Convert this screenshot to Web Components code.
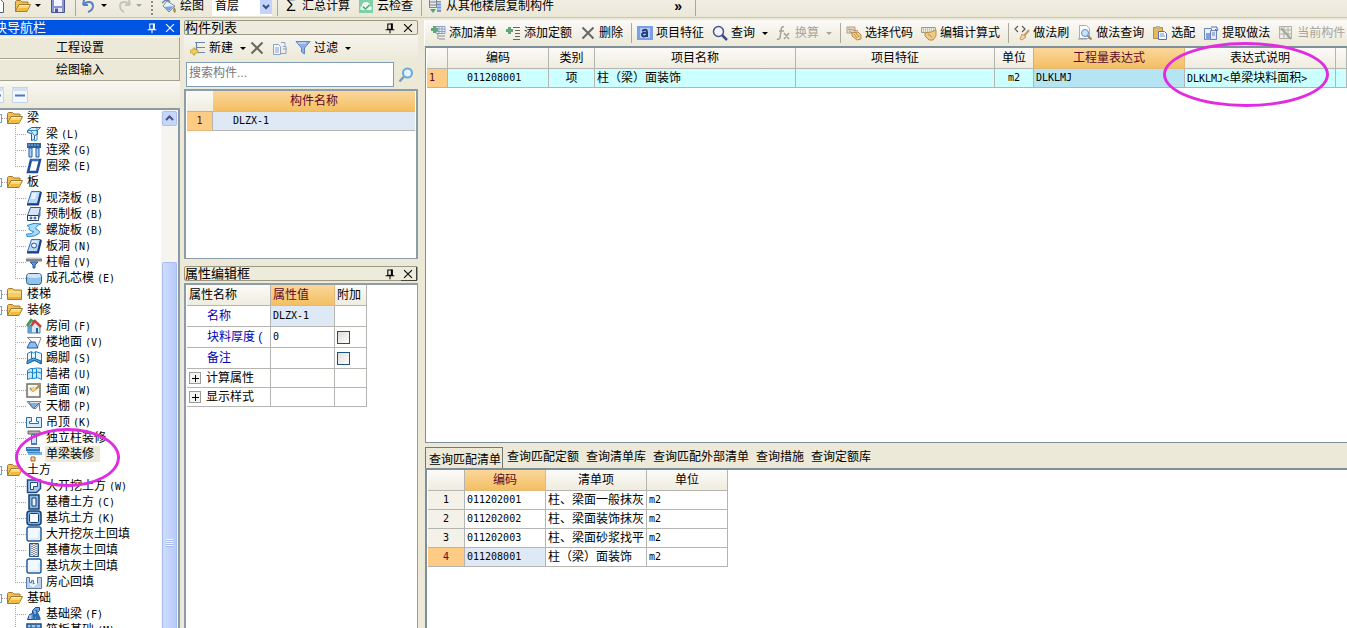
<!DOCTYPE html>
<html lang="zh-CN">
<head>
<meta charset="utf-8">
<title>构件做法</title>
<style>
html, body { margin: 0; height: 100%; overflow: hidden; }
body { font: 12px/16px "Liberation Sans", "Noto Sans CJK SC", sans-serif; color: #000; background: #ece9d8; }
</style>
</head>
<body>
<cost-app></cost-app>
<script>
const base = `
*, *::before, *::after { box-sizing: border-box; }
button { font: inherit; color: inherit; background: none; border: 0; padding: 0; margin: 0; white-space: nowrap; }
.m { font-family: "DejaVu Sans Mono", monospace; font-size: 10px; }
`;
const gridCss = `
table { border-collapse: separate; border-spacing: 0; table-layout: fixed; }
th, td { border: 0 solid #b4b4b0; border-width: 0 1px 1px 0; padding: 0 2px; height: 19px; font-weight: normal; text-align: left; white-space: nowrap; overflow: hidden; line-height: 16px; }
thead th { height: 21px; text-align: center; background: linear-gradient(#fbfaf7, #efecdf); }
thead th.on { background: linear-gradient(#fad79b, #f4bf62); color: #5c0a2c; border-color: #e3b878; }
tbody th { background: #f3f1e8; text-align: center; }
tbody th.on { background: #fdcb83; color: #5c0a2c; }
td.sel { background: #dfe8f5; }
td.c { text-align: center; }
`;
function define(name, css, html, setup) {
  const tpl = document.createElement('template');
  tpl.innerHTML = `<style>${base}${css}</style>${html}`;
  customElements.define(name, class extends HTMLElement {
    constructor() {
      super();
      this.attachShadow({ mode: 'open' }).append(tpl.content.cloneNode(true));
    }
    connectedCallback() { if (setup) setup.call(this, this.shadowRoot); }
  });
}

const B = '#1d5fa8', L = '#a9d3f7';
const sheet = '<path d="M5.500 1.500h9l-3 12h-10z" fill="#bcd8f7" stroke="#3d6fae"/><path d="M6 3h5l-2 6H5z" fill="#e6f2ff"/><path d="M1 14.500h11l3-12.500" fill="none" stroke="#163f8c" stroke-width="2"/>';
const ICONS = {
  folderOpen: '<path d="M.5 13.500v-10l1-1h4l1.500 1.500h6v3" fill="#eebf55" stroke="#a67c2c"/><path d="M.5 13.500l3.500-7h11.500l-3.500 7z" fill="#fbd978" stroke="#a67c2c"/><path d="M2 13l2-3h9.500l-1.500 3z" fill="#f0b941"/><path d="M4.500 7.500h9.500" stroke="#fff0b5"/>',
  folder: '<path d="M.5 13.500v-10l1-1h4l1.500 1.500h7.500v9.500z" fill="#f6cd62" stroke="#a67c2c"/><path d="M1 6h13" stroke="#fdf0b8"/><path d="M1 12h13" stroke="#e5ab3b" stroke-width="2"/>',
  page: '<path d="M2.500 1.500h8l3 3v10h-11z" fill="#fff" stroke="#46648c"/>',
  save: '<path d="M1.500 1.500h13v13h-13z" fill="#8b95cf" stroke="#4b5496"/><path d="M4 2h8v6H4z" fill="#f4f5ff"/><path d="M4 10h8v4H4z" fill="#e4e7f8"/><path d="M5 10.500h3V14H5z" fill="#4b5496"/>',
  undo: '<path d="M2 7l1-5M2 7h5M3 6c3-3 9-3 9 2 0 3-2 5-5 6" fill="none" stroke="#5b82c4" stroke-width="2"/>',
  redo: '<path d="M14 7l-1-5M14 7H9M13 6C10 3 4 3 4 8c0 3 2 5 4 6" fill="none" stroke="#c5c5c0" stroke-width="2"/>',
  draw: '<path d="M6 3l8 5-6 6-6-6z" fill="#e8f1fa" stroke="#7a8ca3"/><path d="M3 9l10-1-5 5z" fill="#7fa5d8"/><path d="M1 5l5-4 3 3" fill="none" stroke="#6c86a4" stroke-width="1.500"/><path d="M13 9q3 3 1 6-3-2-1-6" fill="#a08545"/>',
  check: '<path d="M1 1h14v14H1z" fill="#7fd0a4"/><path d="M3 12q-2-3 1-4 0-4 4-4 4 0 4 4 3 1 1 4z" fill="#e9faf1"/><path d="M5 8.500l2.500 2.500 4-4" fill="none" stroke="#48a577" stroke-width="1.500"/>',
  copyFloor: '<path d="M2.500 1.500h7v8h-7z" fill="#e6e9ec" stroke="#7d858e"/><path d="M3 4h6M3 7h6" stroke="#7d858e"/><path d="M10 3h4v11h-4z" fill="#7295d2"/><path d="M10 5h4M10 8h4M10 11h4" stroke="#e4edfb"/><path d="M3 11h6l-3 4z" fill="#48a577"/>',
  addList: '<path d="M6 1.500h9v7H6z" fill="#eef2fb" stroke="#8b9fc6"/><path d="M6 4h9M6 6.500h9M9 2v6M12 2v6" stroke="#8b9fc6"/><path d="M3 1h3v2h2v3H6v2H3V6H1V3h2z" fill="#61a779"/><path d="M9 11h6M9 14h6M8 8v6" stroke="#8b8b86"/>',
  addQuota: '<path d="M3 2h3v2h2v3H6v2H3V7H1V4h2z" fill="#61a779"/><path d="M8 2.500h7M10 5.500h5M10 8.500h5M10 11.500h5M8 14.500h7" stroke="#686862"/>',
  x: '<path d="M2.500 2.500l11 11M13.500 2.500l-11 11" stroke="#686864" stroke-width="2"/>',
  feature: '<path d="M0 1h16v14H0z" fill="#7b9fe4"/><path d="M3 3h10v10H3z" fill="#b6cdf3"/><path d="M5 6q5-3 5 1v5M10 8q-5-1-5 2 1 3 5 0" fill="none" stroke="#233d7d" stroke-width="2"/>',
  query: '<circle cx="6.500" cy="6.500" r="5" fill="#f2f5ff" stroke="#46528f" stroke-width="1.500"/><path d="M10 10l5 5" stroke="#3c4a90" stroke-width="2.500"/>',
  fx: '<path d="M8 2Q5 1 5 6l-1 7q-1 2-3 1M3 6h5M8 8l5 6M13 8l-5 6" fill="none" stroke="#a2a29b" stroke-width="1.500"/>',
  code: '<path d="M1 2h8v6H1z" fill="#e5dcd0" stroke="#ad9c86"/><path d="M2 4l10 2M3 6l7 4" stroke="#bc8b6a"/><path d="M6 8l6-1 3 3v4l-4 1-5-4z" fill="#f3cf8c" stroke="#ba8b48"/><path d="M8 9l3 4M10 8l3 4" stroke="#ba8b48"/>',
  edit: '<path d="M.5 2.500h14v5H.5z" fill="#ededde" stroke="#9c9c85"/><path d="M2 4h12M2 6h12" stroke="#9c9c85" stroke-dasharray="1 1"/><path d="M4 8l6-1 5-2v6l-3 4H8l-4-4z" fill="#efca83" stroke="#ba9050"/><path d="M7 9l4 3" stroke="#ba9050"/>',
  brush: '<path d="M4 1L1 4l3 3M8 1l3 3-3 3" fill="none" stroke="#5a5a57" stroke-width="1.200"/><path d="M15 5l-5 6" stroke="#c49a64" stroke-width="2"/><path d="M8 9l4 3-4 3-2-1z" fill="#f2d7a5" stroke="#c49a64"/>',
  find: '<path d="M2.500.5h7l3 3v10h-10z" fill="#fff" stroke="#a5aec6"/><circle cx="8" cy="8" r="3.500" fill="#c5e4fc" stroke="#5f8abf"/><path d="M10.500 10.500l4 4" stroke="#a28559" stroke-width="2"/><path d="M1 14h9" stroke="#8793b4"/>',
  paste: '<path d="M1.500 2.500h9v11h-9z" fill="#e6bb57" stroke="#b38e48"/><path d="M4 1h4v3H4z" fill="#b7b4a8"/><path d="M6.500 6.500h6l2 2v6h-8z" fill="#f5f8ff" stroke="#5a6ea8"/><path d="M8 9h4M8 11h5" stroke="#7b91cc"/>',
  extract: '<path d="M1.500 3.500h7v11h-7z" fill="#eaf1ff" stroke="#6a84bd"/><path d="M3 8h7l3 7H3z" fill="#7fa0dc"/><path d="M7.500 5.500h6v9h-6z" fill="#dfeaff" stroke="#6a84bd"/><path d="M8 2h6v4M12 4l2 2 1-2" fill="none" stroke="#4f74b7"/><path d="M9 8h3M9 10h3" stroke="#6a84bd"/>',
  current: '<path d="M1.500 1.500h12v12h-12zM2 5h11M2 9h11M6 2v11M10 2v11" fill="#eeeee8" stroke="#b1b1aa"/><path d="M3 3l10 11" stroke="#a5a59f" stroke-width="2"/>',
  create: '<path d="M5 2.500h10M7 7.500h8M7 12.500h8M6.500 3v10" fill="none" stroke="#6c86b4" stroke-width="1.200"/><path d="M3 8h2v2h3v3H5v2H3v-2H0v-3h3z" fill="#f1d15c" stroke="#a0832a" stroke-width=".5"/>',
  dup: '<path d="M1.500 4.500h5l2 2v8h-7z" fill="#f3f7ff" stroke="#8ba3c9"/><path d="M3 8h4M3 10h4M3 12h4" stroke="#8ba3c9"/><path d="M9 2.500h4v3M9 13.500h5v-7h-3" fill="none" stroke="#8ba3c9"/><path d="M11 9h4" stroke="#8ba3c9"/>',
  filter: '<path d="M1 1.500h14L9.500 8v6l-3-2V8z" fill="#8db1e8" stroke="#5d86c9"/><path d="M3 3h8" stroke="#dcebff"/>',
  lens: '<circle cx="9.500" cy="6" r="4.500" fill="#e4f4ff" stroke="#6ca9d8" stroke-width="2"/><path d="M6 9.500l-4.500 5" stroke="#7d9ac0" stroke-width="2.500"/>',
  collapse: '<path d="M.5.5h15v15H.5z" fill="#f4f8fe" stroke="#c3d3ea"/><path d="M0 1h16v3H0z" fill="#d4e0f1"/><path d="M3 8.500h10" stroke="#4979b6" stroke-width="2"/>',
  pin: '<path d="M5.500 3.500h5v6h-5zM3 10h10M8 10v4" fill="none" stroke="currentColor" stroke-width="1.200"/><path d="M9 3v7h2V3z" fill="currentColor"/>',
  close: '<path d="M3.500 3.500l9 9M12.500 3.500l-9 9" stroke="currentColor" stroke-width="1.200"/>',
  beam: `<path d="M1.500 4.500l4-3h9l-3 3v4l-3 1v4l-3 1v-7l-4-1z" fill="#d7edff" stroke="${B}"/><path d="M1.500 4.500h10l3-3M5 5l3 4M11 2v12l-3 1" fill="none" stroke="#3387cf"/>`,
  link: `<path d="M1 1h14v5H1z" fill="#2f5f9c"/><path d="M2 3h12" stroke="#8fc1ee" stroke-dasharray="2 1"/><path d="M3 6h3v9H3zM10 6h3v9h-3z" fill="${L}" stroke="${B}"/>`,
  ring: '<path d="M5 2h9l-3 12H2z" fill="#fff" stroke="#1e4e98" stroke-width="2.500"/><path d="M5 2h8" stroke="#5a8fcf"/>',
  slab: sheet,
  preslab: '<path d="M4.500 1.500h10l-2 8h-11z" fill="#d7e5f7" stroke="#32558a"/><path d="M1.500 9.500h11v5h-11z" fill="#fff" stroke="#1d3d70"/><path d="M12.500 9.500l2-8v8l-2 5z" fill="#5480b8"/><circle cx="5" cy="12" r="1" fill="none" stroke="#1d3d70"/><circle cx="9" cy="12" r="1" fill="none" stroke="#1d3d70"/>',
  spiral: '<path d="M1 3.500Q8 0 15 2q-6 2-5 5 5 2 3 4.500Q9 15 1 14.500L.5 12q7 0 7-2.500-6-1-4-4z" fill="#a8dbfa" stroke="#2788c6"/>',
  hole: sheet + '<circle cx="8" cy="7.500" r="2.500" fill="#eaf4ff" stroke="#23549a"/>',
  cap: '<path d="M0 4.500h16v3H0z" fill="#858585"/><path d="M1 4h14" stroke="#c7c7c7"/><path d="M4 8h8l-3 3v3H7v-3z" fill="#5597dd" stroke="#265b9c"/>',
  mold: '<rect x=".5" y="3.500" width="15" height="11" rx="3" fill="#8fc3ec" stroke="#2e608f"/><path d="M1 7q7 2 14 0l-1-3H2z" fill="#cbe4f8"/>',
  house: '<path d="M2 7l6-5 6 5v8H2z" fill="#d2e9f7" stroke="#4e81a7"/><path d="M2 7h4v8H2z" fill="#5f9fd2"/><path d="M1 8l4-6 3 2" fill="none" stroke="#3e9a53" stroke-width="2.500"/><path d="M5 8l4-5 6 6" fill="none" stroke="#d03c3a" stroke-width="2.500"/><path d="M10 10h2v5h-2z" fill="#315e9a"/>',
  floor: '<path d="M1 3.500h14M2 4l4 4M15 4l-4 10" fill="none" stroke="#8a8a84"/><path d="M1 14l3-6h5l3 6z" fill="#8ebdef" stroke="#2456a5"/>',
  skirt: `<path d="M1.500 13.500V3.500l4-2q2 3 4 0l6 2v10l-5-2q-2-2-4 0z" fill="#e7f5ff" stroke="#1681cc"/><path d="M1 11l4-2q3-2 5 0l5 2v3l-5-3q-2-1-4 0l-5 3z" fill="#55a8e3" stroke="#1265a6"/><path d="M5.500 2v7M9.500 2v7" stroke="#1681cc"/>`,
  dado: `<path d="M1.500 13.500V4.500q3-3 6-2 4-1 8 0v11q-4-3-8-1-3-1-6 1z" fill="#c9e7ff" stroke="#1681cc"/><path d="M1.500 7q3-2 6 0 4-2 8 0M6.500 3v9M10.500 3v9" fill="none" stroke="#1681cc"/>`,
  wall: '<path d="M1 2h13v13H1z" fill="#f8f8f5" stroke="#6c6c68" stroke-width="1.500"/><path d="M4 6l3 3 5-4 2-4" fill="none" stroke="#b0904a" stroke-width="2"/><path d="M5 6l3-2 2 3-3 3z" fill="#f0d584"/>',
  ceiling: '<path d="M1 3.500h14l-5 7H7z" fill="#dfe3e3" stroke="#7c8583"/><path d="M4 5h8l-3 5H7z" fill="#7dafe5"/><path d="M8 10l5-5 1 8" fill="none" stroke="#4573a4"/><path d="M3 4l4 6" stroke="#427dc0"/>',
  suspended: '<path d="M.5 3.500h5v4h-2v2h9v-2h-2v-4h5v10H.5z" fill="#d5edff" stroke="#276eab"/>',
  column: '<path d="M2 1h12v3H2z" fill="#b5b5b2" stroke="#666"/><path d="M5.500 4.500h5v10h-5z" fill="#cde3f6" stroke="#47708d"/><path d="M5 13h6v2H5z" fill="#4a7db6"/>',
  single: '<path d="M0 1h14v4H0z" fill="#2d79bc"/><path d="M1 2.500h12" stroke="#8ac2ef"/><path d="M2 6h14v3H2z" fill="#75b3e8"/><path d="M1 6h13" stroke="#235d97"/><path d="M5 11h4v4H5z" fill="#f6d39d" stroke="#ad651f"/>',
  dig: '<path d="M1.500 2h13v8.500l-4 4h-9z" fill="#aac8e8" stroke="#1c4f88" stroke-width="1.500"/><path d="M4.500 4.500h7v4h-4v3h-3z" fill="#fff" stroke="#1c4f88"/>',
  trench: '<path d="M3 1h10v14H3z" fill="#8fb8e4" stroke="#16406f" stroke-width="1.500"/><path d="M6 4h4v8H6z" fill="#e8f2fd" stroke="#16406f"/>',
  pit: '<rect x="1" y="1" width="14" height="14" rx="3" fill="#82b4e5" stroke="#153e72" stroke-width="1.500"/><rect x="3.500" y="3.500" width="9" height="9" rx="1" fill="#f7fbff" stroke="#153e72"/>',
  fill: '<rect x="1" y="1" width="14" height="14" rx="2" fill="#f3f8ff" stroke="#235e9c" stroke-width="1.500"/><path d="M3 13h10V5" fill="none" stroke="#cde0f4"/>',
  hatch: '<path d="M3.500 1.500h9v13h-9z" fill="#e8ebef" stroke="#28557f"/><path d="M6 2v12M10 2v12M8 3v11" stroke="#343d47" stroke-dasharray="1 1"/><path d="M4.500 2v12M11.500 2v12" stroke="#8bb3de"/>',
  room: '<path d="M.5 3.500h3v5h2v-2h2v3h4v-6h4v11H.5z" fill="#b9d2ed" stroke="#5c7da5"/><path d="M4 10l3 2 4-3" fill="none" stroke="#f5f9ff" stroke-width="2"/>',
  footing: '<path d="M1.500 13.500l2-5 3-1V4.500l3-3h4v3l-3 3v6z" fill="#77a5da" stroke="#17487f"/><path d="M6.500 14V7l4-4 4 9v2h-4l-1-4-1 4z" fill="#2b6db3"/><path d="M4 9v4M9 5v3" stroke="#dcecff"/>',
  raft: '<path d="M1 2h14v12H1z" fill="#9cc3e9" stroke="#174b82" stroke-width="1.500"/><path d="M2 6h12M2 10h12M5 3v10M10 3v10" stroke="#174b82"/>'
};

define('ui-icon', ':host{display:block;flex:none;width:16px;height:16px} svg{display:block;width:100%;height:100%}',
  '<svg viewBox="0 0 16 16" aria-hidden="true"></svg>',
  function (r) { r.querySelector('svg').innerHTML = ICONS[this.getAttribute('name')] || ''; });

define('tool-button', `
:host { display: block; flex: none; margin-right: 8px; }
:host([disabled]) { color: #a5a49b; }
button { display: flex; align-items: center; gap: 3px; height: 20px; }
i { display: none; width: 0; border: 3px solid transparent; border-top-color: currentColor; border-bottom: 0; margin: 0 0 0 4px; }
:host([menu]) i { display: block; }
:host([bare]) button { gap: 0; }
`, '<button type="button"><ui-icon></ui-icon><slot></slot><i></i></button>',
  function (r) {
    const icon = r.querySelector('ui-icon'), button = r.querySelector('button');
    icon.setAttribute('name', this.getAttribute('icon'));
    icon.connectedCallback();
    button.disabled = this.hasAttribute('disabled');
    button.setAttribute('aria-label', this.getAttribute('label') || this.textContent);
  });

define('tool-sep', ':host{display:block;flex:none;width:1px;height:20px;margin-right:5px;background:#aca899}', '');

define('panel-title', `
:host { display: flex; align-items: center; height: 15px; font-size: 13px; line-height: 15px; border: 1px solid #9b9883; border-radius: 2px; background: #eeebdc; padding-right: 2px; }
:host([active]) { background: #0054e3; border-color: #0054e3; color: #fff; border-radius: 0; }
:host([raised]) { padding-right: 0; }
:host([raised]) button:last-child { width: 16px; border: solid #44443c; border-width: 0 1px 1px 0; }
span { flex: 1; white-space: nowrap; }
button { width: 14px; height: 14px; margin-left: 4px; }
ui-icon { width: 14px; height: 14px; }
`, '<span><slot></slot></span><button type="button" aria-label="固定"><ui-icon name="pin"></ui-icon></button><button type="button" aria-label="关闭"><ui-icon name="close"></ui-icon></button>');

define('main-toolbar', `
:host { display: flex; align-items: center; height: 25px; margin-top: -7px; padding-top: 1px; background: linear-gradient(#f3f1e7, #ebe8d8); border-bottom: 1px solid #c9c5b2; overflow: hidden; }
tool-button[bare] { margin-right: 9px; }
.grip { flex: none; width: 2px; height: 18px; margin-right: 8px; background: repeating-linear-gradient(#8e8c80 0 2px, transparent 2px 4px); }
.pick { position: relative; flex: none; margin-right: 5px; }
select { display: block; width: 60px; height: 20px; appearance: none; border: 0; border-radius: 0; background: #fff; font: inherit; padding: 0 0 0 3px; color: #000; }
.drop { position: absolute; right: 0; top: 3px; width: 12px; height: 15px; background: #c3d3fb; pointer-events: none; }
.drop svg { display: block; width: 12px; height: 15px; }
b { font-size: 16px; width: 16px; text-align: center; flex: none; font-weight: normal; margin-right: 3px; }
.sum { display: flex; align-items: center; margin-right: 8px; height: 20px; }
.more { margin: 0 13px 0 112px; font-size: 14px; font-weight: bold; width: 8px; }
tool-button.first { margin-left: -10px; }
`, `<tool-button class="first" bare icon="page" label="新建"></tool-button>
<tool-button bare menu icon="folderOpen" label="打开"></tool-button>
<tool-button bare icon="save" label="保存"></tool-button><tool-sep></tool-sep>
<tool-button bare menu icon="undo" label="撤销"></tool-button>
<tool-button bare menu disabled icon="redo" label="恢复"></tool-button>
<span class="grip"></span>
<tool-button icon="draw">绘图</tool-button>
<label class="pick"><select aria-label="楼层"><option>首层</option></select><span class="drop"><svg viewBox="0 0 12 15"><path d="M3 6l3 3 3-3" fill="none" stroke="#39517f" stroke-width="2"/></svg></span></label>
<tool-sep></tool-sep>
<button class="sum" type="button"><b>Σ</b>汇总计算</button>
<tool-button icon="check">云检查</tool-button><tool-sep></tool-sep>
<tool-button icon="copyFloor">从其他楼层复制构件</tool-button>
<button class="more" type="button">»</button><tool-sep></tool-sep>`);

define('tree-item', `
:host { display: flex; align-items: center; height: 16px; padding-left: 35px; white-space: nowrap; }
.stem { flex: none; width: 11px; height: 16px; background: repeating-linear-gradient(#a4a4a0 0 1px, transparent 1px 2px) 0 0 / 1px 100% no-repeat, repeating-linear-gradient(90deg, #a4a4a0 0 1px, transparent 1px 2px) 0 8px / 100% 1px no-repeat; }
:host(:last-child) .stem { background-size: 1px 8px, 100% 1px; }
.t { margin-left: 3px; padding: 0 1px; height: 16px; }
:host([selected]) .t { background: #ece9d8; padding-right: 6px; }
.m { margin-left: 3px; }
`, '<span class="stem"></span><ui-icon></ui-icon><span class="t"><slot></slot><span class="m"></span></span>',
  function (r) {
    const icon = r.querySelector('ui-icon');
    icon.setAttribute('name', this.getAttribute('icon'));
    icon.connectedCallback();
    const key = this.getAttribute('key');
    if (key) r.querySelector('.m').textContent = `(${key})`;
    else r.querySelector('.m').remove();
  });

define('tree-group', `
:host { display: block; }
.head { display: flex; align-items: center; height: 16px; padding-left: 13px; white-space: nowrap; }
.box { width: 9px; height: 9px; border: 1px solid #7f9db9; background: #fff; }
.dots { width: 5px; height: 1px; background: repeating-linear-gradient(90deg, #a4a4a0 0 1px, transparent 1px 2px); }
.head span:last-child { margin-left: 4px; }
`, '<div class="head"><i class="box"></i><i class="dots"></i><ui-icon></ui-icon><span></span></div><slot></slot>',
  function (r) {
    const icon = r.querySelector('ui-icon');
    icon.setAttribute('name', this.hasAttribute('closed') ? 'folder' : 'folderOpen');
    icon.connectedCallback();
    r.querySelector('.head span').textContent = this.getAttribute('label');
  });

define('nav-panel', `
:host { display: flex; flex-direction: column; min-height: 0; }
.page { flex: none; height: 22px; border: 1px solid #f8f7f0; border-right-color: #a5a292; border-bottom-color: #a5a292; background: #ece9d8; }
.page:first-of-type { margin-top: 2px; }
.bar { flex: none; display: flex; align-items: center; height: 27px; padding-left: 8px; background: linear-gradient(#f8f7f2, #ece9d8); }
.tree { flex: 1; min-height: 0; display: flex; border: solid #8a9aa6; border-width: 2px 2px 0 0; background: #fff; }
.list { flex: 1; min-width: 0; overflow: hidden; }
.scroll { flex: none; width: 17px; display: flex; flex-direction: column; padding: 1px 1px 0; background: #f5f4ef; overflow: hidden; }
.up { flex: none; height: 15px; border: 1px solid #aebfec; border-radius: 2px; background: #c6d5fc; }
.up svg { display: block; width: 13px; height: 13px; }
.thumb { flex: 1; margin-top: 136px; padding-top: 276px; border: 1px solid #a9bdf0; border-bottom: 0; border-radius: 2px 2px 0 0; background: linear-gradient(90deg, #cfdcfd, #b8cbf9); }
.thumb i { display: block; width: 7px; height: 8px; margin: 0 auto; background: repeating-linear-gradient(#f4f8ff 0 1px, #a3b9ee 1px 2px); }
`, `<panel-title active>模块导航栏</panel-title>
<button class="page" type="button">工程设置</button>
<button class="page" type="button">绘图输入</button>
<div class="bar"><tool-button bare icon="collapse" label="全部展开"></tool-button><tool-button bare icon="collapse" label="全部折叠"></tool-button></div>
<div class="tree"><div class="list">
<tree-group label="梁"><tree-item icon="beam" key="L">梁</tree-item><tree-item icon="link" key="G">连梁</tree-item><tree-item icon="ring" key="E">圈梁</tree-item></tree-group>
<tree-group label="板"><tree-item icon="slab" key="B">现浇板</tree-item><tree-item icon="preslab" key="B">预制板</tree-item><tree-item icon="spiral" key="B">螺旋板</tree-item><tree-item icon="hole" key="N">板洞</tree-item><tree-item icon="cap" key="V">柱帽</tree-item><tree-item icon="mold" key="E">成孔芯模</tree-item></tree-group>
<tree-group label="楼梯" closed></tree-group>
<tree-group label="装修"><tree-item icon="house" key="F">房间</tree-item><tree-item icon="floor" key="V">楼地面</tree-item><tree-item icon="skirt" key="S">踢脚</tree-item><tree-item icon="dado" key="U">墙裙</tree-item><tree-item icon="wall" key="W">墙面</tree-item><tree-item icon="ceiling" key="P">天棚</tree-item><tree-item icon="suspended" key="K">吊顶</tree-item><tree-item icon="column">独立柱装修</tree-item><tree-item icon="single" selected>单梁装修</tree-item></tree-group>
<tree-group label="土方"><tree-item icon="dig" key="W">大开挖土方</tree-item><tree-item icon="trench" key="C">基槽土方</tree-item><tree-item icon="pit" key="K">基坑土方</tree-item><tree-item icon="fill">大开挖灰土回填</tree-item><tree-item icon="hatch">基槽灰土回填</tree-item><tree-item icon="fill">基坑灰土回填</tree-item><tree-item icon="room">房心回填</tree-item></tree-group>
<tree-group label="基础"><tree-item icon="footing" key="F">基础梁</tree-item><tree-item icon="raft" key="M">筏板基础</tree-item><tree-item></tree-item></tree-group>
</div><div class="scroll"><button class="up" type="button" aria-label="向上滚动"><svg viewBox="0 0 13 13"><path d="M3 8l3.500-3.500L10 8" fill="none" stroke="#42567f" stroke-width="2"/></svg></button><div class="thumb"><i></i></div></div></div>`);

define('part-list', gridCss + `
:host { display: flex; flex-direction: column; min-height: 0; }
.bar { flex: none; display: flex; align-items: center; height: 26px; padding-left: 6px; background: linear-gradient(#f6f5ee, #ece9d8); }
.bar tool-button { margin-right: 7px; }
.bar tool-button:first-child { margin-right: 3px; }
.search { flex: none; display: flex; align-items: center; margin: 1px 0 2px 2px; height: 25px; }
input { flex: 1; min-width: 0; height: 25px; border: 1px solid #7f9db9; background: #fff; font: inherit; padding: 0 2px 4px; margin: 0; border-radius: 0; }
input::placeholder { color: #777; opacity: 1; }
.search button { flex: none; width: 24px; display: flex; justify-content: center; }
.grid { flex: 1; min-height: 0; overflow: hidden; border: 2px solid #8c9da8; border-width: 2px 2px 1px; padding: 0 1px; background: #fff; }
table { width: 100%; }
thead th, td { border-right: 0; }
td { padding-left: 20px; }
tbody th { border-bottom-color: #e3b878; }
`, `<panel-title>构件列表</panel-title>
<div class="bar"><tool-button icon="create" menu>新建</tool-button><tool-button bare icon="x" label="删除"></tool-button><tool-button bare icon="dup" label="复制"></tool-button><tool-button icon="filter" menu>过滤</tool-button></div>
<div class="search"><input type="text" placeholder="搜索构件..." aria-label="搜索构件"><button type="button" aria-label="搜索"><ui-icon name="lens"></ui-icon></button></div>
<div class="grid"><table><colgroup><col style="width:26px"><col></colgroup>
<thead><tr><th></th><th class="on">构件名称</th></tr></thead>
<tbody><tr><th class="on m">1</th><td class="sel m">DLZX-1</td></tr></tbody></table></div>`);

define('property-editor', gridCss + `
:host { display: flex; flex-direction: column; min-height: 0; }
panel-title { flex: none; margin-bottom: 2px; }
.grid { flex: 1; min-height: 0; overflow: hidden; border: solid #8c9da8; border-width: 2px 1px 0 2px; padding-left: 1px; background: #fff; }
table { width: 180px; }
thead th { text-align: left; }
.tall td { height: 21px; }
.p { color: #0000b4; padding-left: 20px; }
.exp { display: flex; align-items: center; gap: 5px; }
.exp button { width: 12px; height: 12px; border: 1px solid #9c9c98; background: #f3f3f0; position: relative; }
.exp button::before, .exp button::after { content: ""; position: absolute; background: #000; left: 2px; top: 5px; width: 7px; height: 1px; }
.exp button::after { left: 5px; top: 2px; width: 1px; height: 7px; }
input { appearance: none; display: block; width: 13px; height: 13px; margin: 0; border: 1px solid #1c5180; background: linear-gradient(135deg, #dcdcd7, #fff); }
`, `<panel-title raised>属性编辑框</panel-title>
<div class="grid"><table><colgroup><col style="width:84px"><col style="width:64px"><col style="width:32px"></colgroup>
<thead><tr><th>属性名称</th><th class="on">属性值</th><th>附加</th></tr></thead>
<tbody>
<tr class="tall"><td class="p">名称</td><td class="sel m">DLZX-1</td><td></td></tr>
<tr class="tall"><td class="p">块料厚度 (</td><td class="m">0</td><td><input type="checkbox" aria-label="块料厚度 附加"></td></tr>
<tr class="tall"><td class="p">备注</td><td></td><td><input type="checkbox" aria-label="备注 附加"></td></tr>
<tr><td><div class="exp"><button type="button" aria-label="展开计算属性"></button>计算属性</div></td><td></td><td></td></tr>
<tr><td><div class="exp"><button type="button" aria-label="展开显示样式"></button>显示样式</div></td><td></td><td></td></tr>
</tbody></table></div>`);

define('bill-grid', gridCss + `
:host { display: flex; flex-direction: column; min-height: 0; }
.bar { flex: none; display: flex; align-items: center; height: 26px; padding-left: 5px; overflow: hidden; background: linear-gradient(#fbfaf7, #ece9d8); border-left: 1px solid #fff; }
.grid { flex: 1; min-height: 0; overflow: hidden; border: solid #7f8f9c; border-width: 2px 0 1px 1px; margin-left: 1px; padding-left: 1px; background: #fff; }
table { width: 100%; }
tbody td { background: #ccffff; }
tbody td.hot { background: #b5e5f3; }
tbody th { text-align: left; }
`, `<div class="bar">
<tool-button icon="addList">添加清单</tool-button><tool-button icon="addQuota">添加定额</tool-button><tool-button icon="x">删除</tool-button><tool-sep></tool-sep>
<tool-button icon="feature">项目特征</tool-button><tool-button icon="query" menu>查询</tool-button><tool-button icon="fx" menu disabled>换算</tool-button><tool-sep></tool-sep>
<tool-button icon="code">选择代码</tool-button><tool-button icon="edit">编辑计算式</tool-button><tool-sep></tool-sep>
<tool-button icon="brush">做法刷</tool-button><tool-button icon="find">做法查询</tool-button><tool-button icon="paste">选配</tool-button><tool-button icon="extract">提取做法</tool-button><tool-button icon="current" disabled>当前构件</tool-button></div>
<div class="grid"><table><colgroup><col style="width:21px"><col style="width:101px"><col style="width:46px"><col style="width:201px"><col style="width:199px"><col style="width:39px"><col style="width:151px"><col style="width:151px"><col></colgroup>
<thead><tr><th></th><th>编码</th><th>类别</th><th>项目名称</th><th>项目特征</th><th>单位</th><th class="on">工程量表达式</th><th>表达式说明</th><th></th></tr></thead>
<tbody><tr><th class="on m">1</th><td class="m" style="padding-left:19px">011208001</td><td class="c">项</td><td>柱（梁）面装饰</td><td></td><td class="c m">m2</td><td class="hot m">DLKLMJ</td><td><span class="m">DLKLMJ&lt;</span>单梁块料面积<span class="m">&gt;</span></td><td></td></tr></tbody></table></div>`);

define('match-panel', gridCss + `
:host { display: flex; flex-direction: column; min-height: 0; padding-left: 1px; }
nav { flex: none; display: flex; height: 21px; gap: 7px; }
nav button { height: 20px; }
nav button[aria-selected=true] { height: 21px; padding: 3px 1px 0 3px; margin-right: -3px; border: 1px solid #77776c; border-bottom: 0; }
.grid { flex: 1; min-height: 0; overflow: hidden; border: solid #7f8f9c; border-width: 2px 0 0 2px; padding: 0 0 0 1px; background: #fff; }
table { width: 300px; }
`, `<nav role="tablist"><button type="button" role="tab" aria-selected="true">查询匹配清单</button><button type="button" role="tab">查询匹配定额</button><button type="button" role="tab">查询清单库</button><button type="button" role="tab">查询匹配外部清单</button><button type="button" role="tab">查询措施</button><button type="button" role="tab">查询定额库</button></nav>
<div class="grid"><table><colgroup><col style="width:37px"><col style="width:81px"><col style="width:101px"><col style="width:81px"></colgroup>
<thead><tr><th></th><th class="on">编码</th><th>清单项</th><th>单位</th></tr></thead>
<tbody>
<tr><th class="m">1</th><td class="m">011202001</td><td>柱、梁面一般抹灰</td><td class="m">m2</td></tr>
<tr><th class="m">2</th><td class="m">011202002</td><td>柱、梁面装饰抹灰</td><td class="m">m2</td></tr>
<tr><th class="m">3</th><td class="m">011202003</td><td>柱、梁面砂浆找平</td><td class="m">m2</td></tr>
<tr><th class="on m">4</th><td class="sel m">011208001</td><td>柱（梁）面装饰</td><td class="m">m2</td></tr>
</tbody></table></div>`);

define('ring-mark', `
:host { display: block; box-sizing: border-box; position: absolute; pointer-events: none; border: 3px solid #e22be0; border-radius: 50%; }
`, '');

define('cost-app', `
:host { display: flex; flex-direction: column; height: 100vh; position: relative; overflow: hidden; }
main-toolbar { flex: none; }
main { flex: 1; min-height: 0; display: grid; grid-template-columns: 200px 234px 1fr; margin-left: -20px; padding-top: 2px; }
.mid { display: flex; flex-direction: column; gap: 7px; min-height: 0; margin-left: 4px; margin-right: -4px; }
.right { display: flex; flex-direction: column; gap: 4px; min-height: 0; min-width: 0; margin-left: 10px; }
part-list { flex: 239 0 0; }
property-editor { flex: 362 0 0; }
bill-grid { flex: 423 0 0; }
match-panel { flex: 181 0 0; }
.a { left: 15px; top: 428px; width: 105px; height: 59px; }
.b { left: 1163px; top: 42px; width: 166px; height: 65px; }
`, `<main-toolbar></main-toolbar>
<main><nav-panel></nav-panel>
<div class="mid"><part-list></part-list><property-editor></property-editor></div>
<div class="right"><bill-grid></bill-grid><match-panel></match-panel></div></main>
<ring-mark class="a"></ring-mark><ring-mark class="b"></ring-mark>`);
</script>
</body>
</html>
